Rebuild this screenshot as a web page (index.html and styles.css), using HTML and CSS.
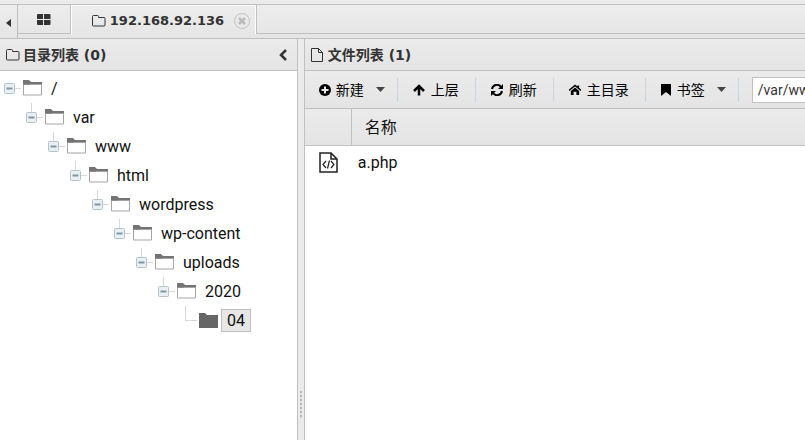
FILE: index.html
```html
<!DOCTYPE html>
<html lang="zh-CN">
<head>
  <meta charset="UTF-8" />
  <meta name="viewport" content="width=device-width, initial-scale=1" />
  <title>192.168.92.136</title>
  <link rel="stylesheet" href="styles.css">
</head>
<body>

  <!-- Shared icons -->
  <svg class="sprite" aria-hidden="true">
    <symbol id="i-folder-o" viewBox="0 0 14 12">
      <path d="M.5 2v8q0 1 1 1h10.500q1 0 1-1v-6.500q0-1-1-1H6.500V1.500q0-1-1-1h-4q-1 0-1 1z" fill="none" stroke="currentColor" />
    </symbol>
    <symbol id="i-folder" viewBox="0 0 20 17">
      <path d="M0 0h6l2 2h11v4H0z" fill="#747474" />
      <path d="M.5 4.500h18v10.500H.5z" fill="#fff" stroke="#a6a6a6" />
      <path d="M0 4h7l1-1h11" fill="none" stroke="#747474" />
    </symbol>
    <symbol id="i-folder-full" viewBox="0 0 20 17">
      <path d="M0 1h6l2 2h11v13H0z" fill="#666" />
    </symbol>
    <symbol id="i-minus" viewBox="0 0 11 11">
      <rect x=".5" y=".5" width="10" height="10" rx="1" fill="#e9f0f3" stroke="#b4c3ca" />
      <path d="M2.500 5.500h6" stroke="#7d98a3" stroke-width="2" />
    </symbol>
  </svg>

  <!-- Tabs -->
  <nav class="tabbar">
    <button class="scroll-left" aria-label="向左"><svg width="5" height="8"><path d="M5 0v8L0 4z" fill="#333" /></svg></button>
    <div class="tabs">
      <button class="tab" aria-label="首页">
        <svg width="14" height="12"><path d="M0 1q0-1 1-1h5v5H0zM7 0h5.500q1 0 1 1v4H7zM0 6h6v5H1q-1 0-1-1zM7 6h6.500v4q0 1-1 1H7z" fill="#333" /></svg>
      </button>
      <div class="tab active">
        <svg width="14" height="12"><use href="#i-folder-o" /></svg>
        <a href="#files">192.168.92.136</a>
        <button class="close" aria-label="关闭"><svg width="16" height="16"><circle cx="8" cy="8" r="7.500" fill="none" stroke="#c4c4c4" /><path d="M5 5l6 6M11 5l-6 6" stroke="#bbb" stroke-width="2.500" /></svg></button>
      </div>
      <div class="tab-rest"></div>
    </div>
  </nav>

  <main>
    <!-- Folder tree -->
    <section class="folders">
      <header class="panel-head">
        <svg width="14" height="12"><use href="#i-folder-o" /></svg>
        <h2>目录列表 (0)</h2>
        <button class="collapse" aria-label="收起"><svg width="8" height="12"><path d="M7 1L2 6l5 5" fill="none" stroke="#333" stroke-width="2.500" /></svg></button>
      </header>
      <ul class="tree">
        <li><div class="node"><svg class="toggle"><use href="#i-minus" /></svg><svg class="folder"><use href="#i-folder" /></svg><span class="label">/</span></div>
        <ul><li><div class="node"><svg class="toggle"><use href="#i-minus" /></svg><svg class="folder"><use href="#i-folder" /></svg><span class="label">var</span></div>
        <ul><li><div class="node"><svg class="toggle"><use href="#i-minus" /></svg><svg class="folder"><use href="#i-folder" /></svg><span class="label">www</span></div>
        <ul><li><div class="node"><svg class="toggle"><use href="#i-minus" /></svg><svg class="folder"><use href="#i-folder" /></svg><span class="label">html</span></div>
        <ul><li><div class="node"><svg class="toggle"><use href="#i-minus" /></svg><svg class="folder"><use href="#i-folder" /></svg><span class="label">wordpress</span></div>
        <ul><li><div class="node"><svg class="toggle"><use href="#i-minus" /></svg><svg class="folder"><use href="#i-folder" /></svg><span class="label">wp-content</span></div>
        <ul><li><div class="node"><svg class="toggle"><use href="#i-minus" /></svg><svg class="folder"><use href="#i-folder" /></svg><span class="label">uploads</span></div>
        <ul><li><div class="node"><svg class="toggle"><use href="#i-minus" /></svg><svg class="folder"><use href="#i-folder" /></svg><span class="label">2020</span></div>
        <ul><li><div class="node leaf"><span class="toggle"></span><svg class="folder"><use href="#i-folder-full" /></svg><span class="label selected">04</span></div></li></ul>
        </li></ul></li></ul></li></ul></li></ul></li></ul></li></ul></li></ul></li>
      </ul>
    </section>

    <div class="sash"></div>

    <!-- File list -->
    <section class="files" id="files">
      <header class="panel-head">
        <svg width="14" height="14"><path d="M.5.5h7l4 4v9H.5zM7.500.5v4h4" fill="none" stroke="#333" /></svg>
        <h2>文件列表 (1)</h2>
      </header>
      <div class="toolbar">
        <button class="tool menu">
          <svg width="12" height="12"><circle cx="6" cy="6" r="6" /><path d="M6 2.500v7M2.500 6h7" stroke="#e8e8e8" stroke-width="2" /></svg>
          新建
          <svg class="caret" width="9" height="5"><path d="M0 0h9L4.500 5z" /></svg>
        </button>
        <button class="tool">
          <svg width="12" height="12"><path d="M6 11.500V2M1 7l5-5 5 5" fill="none" stroke="#000" stroke-width="2.500" /></svg>
          上层
        </button>
        <button class="tool">
          <svg width="12" height="12"><path d="M1 5a5 5 0 0 1 9-2M11 7a5 5 0 0 1-9 2" fill="none" stroke="#000" stroke-width="2" /><path d="M12 0v5H7zM0 12V7h5z" /></svg>
          刷新
        </button>
        <button class="tool">
          <svg width="12" height="12" viewBox="0 0 13 12"><path d="M0 6.500l6.500-5.500L13 6.500" fill="none" stroke="#000" stroke-width="1.500" /><path d="M9 1h2v4L9 3zM2 7l4.500-3.800L11 7v4.500H8V8H5v3.500H2z" /></svg>
          主目录
        </button>
        <button class="tool menu">
          <svg width="12" height="12"><path d="M1 0h10v12L6 8l-5 4z" /></svg>
          书签
          <svg class="caret" width="9" height="5"><path d="M0 0h9L4.500 5z" /></svg>
        </button>
        <input class="path" type="text" aria-label="路径" value="/var/www/html/wordpress/wp-content/uploads/2020/04/">
      </div>
      <table>
        <thead>
          <tr><th class="icon-col"></th><th>名称</th></tr>
        </thead>
        <tbody>
          <tr>
            <td class="icon-col"><svg width="19" height="21"><path d="M1 1h11l6 6v13H1zM12 1v6h6" fill="none" stroke="#222" stroke-width="1.500" /><path d="M7 9l-3 3.500L7 16M12 9l3 3.500-3 3.500M10.500 8.500l-2 8" fill="none" stroke="#222" stroke-width="1.200" /></svg></td>
            <td>a.php</td>
          </tr>
        </tbody>
      </table>
    </section>
  </main>

</body>
</html>
```
FILE: styles.css
```css
* {
  margin: 0;
  padding: 0;
  box-sizing: border-box;
}

body {
  display: flex;
  flex-direction: column;
  height: 100vh;
  overflow: hidden;
  border-top: 4px solid #ebebeb;
  background: #e7e7e7;
  color: #111;
  font-family: Tahoma, Roboto, "Noto Sans CJK SC", sans-serif;
  font-size: 16px;
}

button {
  border: none;
  background: none;
  color: inherit;
  font: inherit;
  cursor: pointer;
}

svg {
  flex: none;
  display: block;
}

.sprite {
  position: absolute;
  width: 0;
  height: 0;
}

/* Tabs */
.tabbar {
  display: flex;
  flex: none;
  height: 35px;
  border-top: 1px solid #c0c0c0;
  border-bottom: 1px solid #c0c0c0;
  background: linear-gradient(#ededed, #e5e5e5);
}

.scroll-left {
  width: 18px;
  padding: 2px 6px 0;
  border-right: 1px solid #c0c0c0;
}

.tabs {
  display: flex;
  flex: 1;
  height: 29px;
}

.tab {
  display: flex;
  align-items: center;
  justify-content: center;
  width: 53px;
  padding-top: 2px;
  border: solid #c0c0c0;
  border-width: 0 1px 1px 0;
}

.tab.active {
  width: 186px;
  gap: 4px;
  padding-left: 15px;
  border-bottom: none;
  box-shadow: inset 1px 1px #fff, inset -1px 0 #fff;
  color: #333;
}

.tab a {
  color: #333;
  font-family: "DejaVu Sans", sans-serif;
  font-size: 13px;
  font-weight: bold;
  text-decoration: none;
}

.close {
  margin-left: 6px;
}

.tab-rest {
  flex: 1;
  border-bottom: 1px solid #c0c0c0;
}

/* Panels */
main {
  display: flex;
  flex: 1;
  min-height: 0;
}

.folders {
  flex: 0 0 37%;
  margin-right: -1px;
  background: #fff;
}

.files {
  flex: 1;
  min-width: 0;
  overflow: hidden;
  background: #fff;
}

.panel-head {
  display: flex;
  align-items: center;
  gap: 3px;
  height: 32px;
  padding: 0 11px 0 6px;
  border-bottom: 1px solid #c0c0c0;
  background: linear-gradient(#ebebeb, #e4e4e4);
  color: #333;
}

.panel-head h2 {
  font-family: "DejaVu Sans", "Noto Sans CJK SC", sans-serif;
  font-size: 14px;
  line-height: 20px;
}

.collapse {
  margin-left: auto;
}

.sash {
  display: flex;
  align-items: center;
  justify-content: center;
  position: relative;
  flex: 0 0 8px;
  padding-top: 330px;
  border: solid #c0c0c0;
  border-width: 0 1px;
  background: #ebebeb;
}

.sash::before {
  content: "";
  width: 2px;
  height: 28px;
  background: repeating-linear-gradient(#bbb 0 2px, #e0e0e0 2px 4px);
}

/* Folder tree */
.tree {
  padding: 3px 0 0 4px;
  list-style: none;
}

.tree ul {
  padding-left: 22px;
  list-style: none;
}

.node {
  display: flex;
  align-items: center;
  position: relative;
  height: 29px;
}

.toggle {
  width: 11px;
  height: 11px;
}

.folder {
  width: 20px;
  height: 17px;
  margin-left: 8px;
}

.label {
  height: 23px;
  margin-left: 2px;
  padding: 0 5px;
  border: 1px solid transparent;
  line-height: 21px;
}

.label.selected {
  border-color: #c0c0c0;
  background: #e7e7e7;
}

/* connector lines */
.node::before {
  content: "";
  position: absolute;
  top: 14px;
  left: 11px;
  width: 6px;
  height: 1px;
  background: #d8d8d8;
}

.tree ul .node::after {
  content: "";
  position: absolute;
  top: 0;
  left: 5px;
  width: 1px;
  height: 9px;
  background: #d8d8d8;
}

.node.leaf::before {
  left: 5px;
  width: 12px;
}

.tree ul .node.leaf::after {
  height: 15px;
}

/* Toolbar */
.toolbar {
  display: flex;
  align-items: center;
  height: 38px;
  border-bottom: 1px solid #c0c0c0;
  background: linear-gradient(#ebebeb, #e4e4e4);
}

.tool {
  display: flex;
  align-items: center;
  flex: none;
  gap: 6px;
  height: 24px;
  padding: 0 16px 0 15px;
  border-right: 1px solid #c5d6dc;
  color: #000;
  font-size: 14px;
  line-height: 20px;
}

.tool.menu {
  gap: 5px;
  padding: 0 12px 0 14px;
}

.caret {
  margin-left: 7px;
  fill: #444;
}

.path {
  flex: none;
  width: 360px;
  height: 26px;
  margin-left: 13px;
  padding: 0 5px;
  border: 1px solid #c0c0c0;
  background: #fff;
  color: #333;
  font: inherit;
  font-size: 14px;
}

/* File table */
table {
  width: 100%;
  border-collapse: separate;
  border-spacing: 0;
}

th {
  height: 37px;
  padding: 2px 0 0 13px;
  border-bottom: 1px solid #c0c0c0;
  background: linear-gradient(#ebebeb, #e4e4e4);
  font-size: 16px;
  font-weight: normal;
  line-height: 20px;
  text-align: left;
}

th.icon-col {
  border-right: 1px solid #c0c0c0;
}

.icon-col {
  width: 47px;
}

td {
  height: 33px;
  padding-left: 6px;
}

td.icon-col {
  padding-left: 14px;
}
```
